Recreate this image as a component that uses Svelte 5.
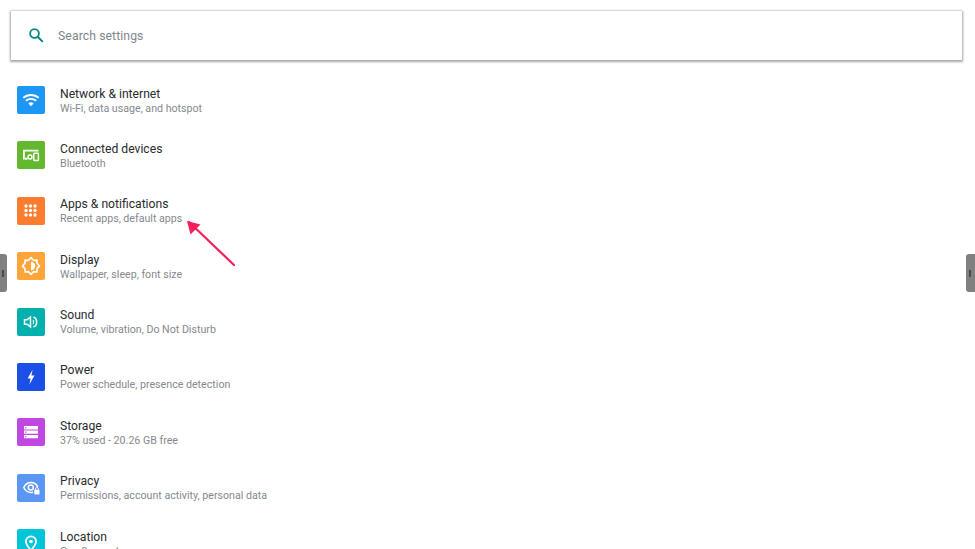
<script lang="ts">
  const rows = [
    { id: "wifi", title: "Network & internet", sub: "Wi-Fi, data usage, and hotspot", color: "#1c97f3" },
    { id: "devices", title: "Connected devices", sub: "Bluetooth", color: "#64b82d" },
    { id: "apps", title: "Apps & notifications", sub: "Recent apps, default apps", color: "#fb7c2e" },
    { id: "display", title: "Display", sub: "Wallpaper, sleep, font size", color: "#fea53a" },
    { id: "sound", title: "Sound", sub: "Volume, vibration, Do Not Disturb", color: "#02b1ad" },
    { id: "power", title: "Power", sub: "Power schedule, presence detection", color: "#1b4fe6" },
    { id: "storage", title: "Storage", sub: "37% used - 20.26 GB free", color: "#c048e0" },
    { id: "privacy", title: "Privacy", sub: "Permissions, account activity, personal data", color: "#5a96f3" },
    { id: "location", title: "Location", sub: "On - 3 apps have access", color: "#03c5d9" },
  ];
  const dots = [0, 1, 2].flatMap((y) => [0, 1, 2].map((x) => [9 + x * 4.5, 9 + y * 4.5]));
</script>

<div class="page">
  <div class="search">
    <svg class="glass" viewBox="0 0 24 24" width="19" height="19">
      <circle cx="9.5" cy="9.5" r="5.5" fill="none" stroke="#00897b" stroke-width="2.3" />
      <path d="M13.5 13.5 20 20" stroke="#00897b" stroke-width="2.5" />
    </svg>
    <span class="placeholder">Search settings</span>
  </div>

  <ul class="list">
    {#each rows as row}
      <li class="row">
        <span class="icon" style="background: {row.color}">
          <svg viewBox="0 0 28 28" width="28" height="28" fill="#fff">
            {#if row.id === "wifi"}
              <g fill="none" stroke="#fff" stroke-width="1.9">
                <path d="M6.3 11.9a11.5 11.5 0 0 1 15.4 0" />
                <path d="M8.9 14.8a7.6 7.6 0 0 1 10.200 0" />
              </g>
              <path d="M11.400 17.400a3.900 3.900 0 0 1 5.200 0L14 20.200z" />
            {:else if row.id === "devices"}
              <path d="M6 8.700h15.500v1.800H7.800v8.100H6z" />
              <path d="M8 16.700h2.500v2H8z" />
              <circle cx="13" cy="16" r="2" fill="none" stroke="#fff" stroke-width="1.500" />
              <rect x="16.800" y="12.300" width="4.600" height="7.200" rx=".6" fill="none" stroke="#fff" stroke-width="1.500" />
            {:else if row.id === "apps"}
              {#each dots as [cx, cy]}
                <circle {cx} {cy} r="1.650" />
              {/each}
            {:else if row.id === "display"}
              <path d="M14 5.700l2.600 2.700 3.200-.3.300 3.300L22.400 14l-2.300 2.600-.3 3.300-3.200-.3L14 22.300l-2.600-2.700-3.200.3-.3-3.300L5.600 14l2.300-2.600.3-3.300 3.200.3z" fill="none" stroke="#fff" stroke-width="1.700" />
              <path d="M14 9.800a4.200 4.200 0 0 1 0 8.400z" />
            {:else if row.id === "sound"}
              <path d="M7.500 11.800h2.600l3.400-2.800v10l-3.400-2.800H7.500z" fill="none" stroke="#fff" stroke-width="1.500" />
              <path d="M15.800 11.400a3 3 0 0 1 0 5.200z" />
              <path d="M16.500 8.800a5.800 5.800 0 0 1 0 10.400" fill="none" stroke="#fff" stroke-width="1.400" />
            {:else if row.id === "power"}
              <path d="M15.600 6.800 10.600 15.400h3l-1.200 6.200 5.100-9.200h-3.100z" />
            {:else if row.id === "storage"}
              <path fill-rule="evenodd" d="M7 8h14v3.400H7zM8.200 9v1.200h1.200V9z" />
              <path fill-rule="evenodd" d="M7 12.400h14v3.400H7zM8.200 13.500v1.200h1.200v-1.200z" />
              <path fill-rule="evenodd" d="M7 16.900h14v3.400H7zM8.200 18v1.200h1.200V18z" />
            {:else if row.id === "privacy"}
              <path d="M20.700 13.100C19.500 10.200 17 8.500 14 8.500c-3.200 0-5.800 2-7.200 5 1.400 3 4 5 7.200 5 .7 0 1.300-.1 2-.3" fill="none" stroke="#fff" stroke-width="1.600" />
              <circle cx="13.800" cy="13.500" r="2.500" fill="none" stroke="#fff" stroke-width="1.500" />
              <rect x="17.200" y="15.800" width="5.300" height="4.600" rx=".6" />
              <path d="M18.400 16v-1a1.500 1.500 0 0 1 3 0v1" fill="none" stroke="#fff" stroke-width=".9" />
            {:else}
              <path fill-rule="evenodd" d="M14 6.500a6 6 0 0 0-6 6c0 4 6 10 6 10s6-6 6-10a6 6 0 0 0-6-6zm0 1.800a4.200 4.200 0 0 1 4.200 4.200c0 2.400-2.700 5.700-4.200 7.400-1.500-1.700-4.200-5-4.200-7.400A4.200 4.200 0 0 1 14 8.300z" />
              <circle cx="14" cy="12.500" r="1.800" />
            {/if}
          </svg>
        </span>
        <span class="text">
          <span class="title">{row.title}</span>
          <span class="sub">{row.sub}</span>
        </span>
      </li>
    {/each}
  </ul>

  <div class="handle left"><i></i></div>
  <div class="handle right"><i></i></div>

  <svg class="arrow" viewBox="0 0 60 60" width="60" height="60">
    <path d="M13 12 58 55" stroke="#f51f5d" stroke-width="2.200" stroke-linecap="round" />
    <path d="M11 11 24.500 14.500 14.500 24.500z" fill="#f51f5d" />
  </svg>
</div>

<style>
  :global(body) {
    margin: 0;
    background: #fff;
  }

  .page {
    position: relative;
    width: 975px;
    height: 549px;
    overflow: hidden;
    font-family: Roboto, sans-serif;
    background: #fff;
    padding-top: 11px;
    box-sizing: border-box;
  }

  .search {
    display: flex;
    align-items: center;
    width: 951px;
    height: 49px;
    margin-left: 11px;
    box-sizing: border-box;
    padding-left: 16px;
    gap: 12px;
    background: #fff;
    box-shadow: 0 1px 2px 1px rgba(0, 0, 0, 0.34), 0 -1px 2px rgba(0, 0, 0, 0.05);
  }

  .placeholder {
    font-size: 12.2px;
    color: #80868b;
    letter-spacing: 0.1px;
  }

  .list {
    list-style: none;
    margin: 0;
    padding: 26px 0 0 17px;
  }

  .row {
    display: flex;
    align-items: center;
    gap: 15px;
    height: 28px;
    margin-bottom: 27.4px;
  }

  .icon {
    flex: none;
    display: block;
    width: 28px;
    height: 28px;
    border-radius: 2px;
  }

  .icon svg {
    display: block;
  }

  .text {
    display: flex;
    flex-direction: column;
    padding-top: 2px;
  }

  .title {
    font-size: 12.15px;
    line-height: 15px;
    color: #2a2c2f;
  }

  .sub {
    font-size: 10.65px;
    line-height: 15px;
    margin-top: -1px;
    color: #85898d;
  }

  .handle {
    position: absolute;
    top: 254px;
    width: 9px;
    height: 38px;
    display: flex;
    align-items: center;
    background: #808080;
  }

  .handle i {
    display: block;
    width: 2px;
    height: 7px;
    background: #4a4a4a;
  }

  .handle.left {
    left: 0;
    width: 7px;
    border-radius: 0 3px 3px 0;
    padding-left: 2px;
    box-sizing: border-box;
  }

  .handle.right {
    right: 0;
    border-radius: 3px 0 0 3px;
    padding-left: 3px;
    box-sizing: border-box;
  }

  .arrow {
    position: absolute;
    left: 176px;
    top: 210px;
  }
</style>
